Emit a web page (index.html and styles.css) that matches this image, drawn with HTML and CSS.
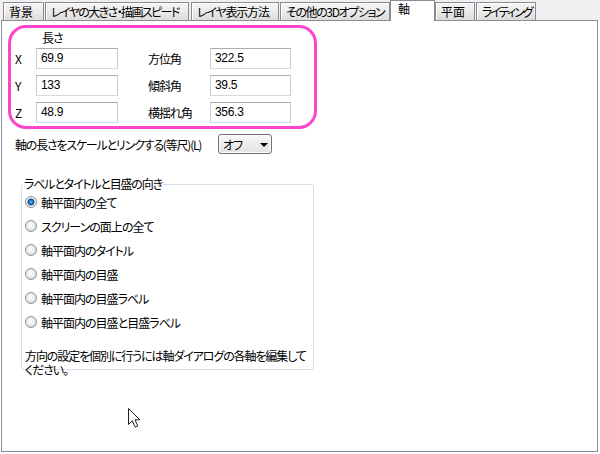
FILE: index.html
```html
<!DOCTYPE html>
<html lang="ja">
<head>
<meta charset="utf-8">
<title>軸</title>
<link rel="stylesheet" href="styles.css">
</head>
<body>
<div class="tabs">
  <div class="tab t1">背景</div>
  <div class="tab t2">レイヤの大きさ・描画スピード</div>
  <div class="tab t3">レイヤ表示方法</div>
  <div class="tab t4">その他の3Dオプション</div>
  <div class="tab sel t5">軸</div>
  <div class="tab t6">平面</div>
  <div class="tab t7">ライティング</div>
</div>
<div class="panel">
  <div class="hl">
    <div class="len-title">長さ</div>
    <div class="grid">
      <span class="lbl">X</span><div class="inp">69.9</div><span></span><span class="lbl">方位角</span><div class="inp">322.5</div>
      <span class="lbl">Y</span><div class="inp">133</div><span></span><span class="lbl">傾斜角</span><div class="inp">39.5</div>
      <span class="lbl">Z</span><div class="inp">48.9</div><span></span><span class="lbl">横揺れ角</span><div class="inp">356.3</div>
    </div>
  </div>
  <div class="link-row">
    <span class="link-lbl">軸の長さをスケールとリンクする(等尺)(L)</span>
    <div class="combo"><span>オフ</span><span class="arrow"></span></div>
  </div>
  <fieldset class="grp">
    <legend>ラベルとタイトルと目盛の向き</legend>
    <div class="opts">
      <div class="opt"><span class="radio on"></span>軸平面内の全て</div>
      <div class="opt"><span class="radio"></span>スクリーンの面上の全て</div>
      <div class="opt"><span class="radio"></span>軸平面内のタイトル</div>
      <div class="opt"><span class="radio"></span>軸平面内の目盛</div>
      <div class="opt"><span class="radio"></span>軸平面内の目盛ラベル</div>
      <div class="opt"><span class="radio"></span>軸平面内の目盛と目盛ラベル</div>
    </div>
    <p class="note">方向の設定を個別に行うには軸ダイアログの各軸を編集して<br>ください。</p>
  </fieldset>
  <svg class="cursor" width="13" height="20" viewBox="0 0 13 20">
    <path d="M0.5 0.5 L0.5 16.5 L4.3 12.8 L7.2 19.2 L9.8 18 L7 11.8 L11.8 11.8 Z" fill="#fff" stroke="#222" stroke-width="1" stroke-linejoin="miter"/>
  </svg>
</div>
</body>
</html>
```
FILE: styles.css
```css
body {
  margin: 0;
  width: 600px;
  height: 454px;
  overflow: hidden;
  background: #fff;
  color: #000;
  font-family: "Noto Sans CJK JP", "Noto Sans", sans-serif;
  font-size: 12px;
  font-feature-settings: "palt";
  letter-spacing: -1px;
}

.tabs {
  display: flex;
  align-items: flex-end;
  height: 20px;
  padding-left: 3px;
  background: #f0f0f0;
}

.tab {
  box-sizing: border-box;
  height: 18px;
  border: 1px solid #898c95;
  border-bottom: none;
  background: linear-gradient(#f5f5f5, #ebebeb 50%, #dcdcdc);
  box-shadow: inset 1px 1px 0 #fff;
  padding: 1px 0 0 5px;
  line-height: 16px;
  white-space: nowrap;
  overflow: hidden;
}

.t1 { width: 41px; letter-spacing: 0; }
.t2 { width: 144px; margin-left: 1px; letter-spacing: -1.6px; }
.t3 { width: 88px; margin-left: 2px; letter-spacing: -1.2px; }
.t4 { width: 110px; margin-left: 1px; letter-spacing: -1.4px; }
.t5 { width: 45px; }
.t6 { width: 40px; letter-spacing: 0; }
.t7 { width: 60px; margin-left: 1px; letter-spacing: -2px; }

.sel {
  height: 21px;
  margin-bottom: -1px;
  position: relative;
  z-index: 1;
  background: #fff;
  box-shadow: none;
  padding: 0 0 0 7px;
}

.panel {
  box-sizing: border-box;
  position: relative;
  width: 597px;
  height: 432px;
  margin-left: 1px;
  border: 1px solid #898c95;
  background: #fff;
}

.hl {
  box-sizing: border-box;
  width: 309px;
  height: 104px;
  margin: 4px 0 0 6px;
  padding: 3px 0 0 4px;
  border: 3px solid #ff44cc;
  border-radius: 18px;
}

.len-title {
  margin-left: 27px;
  line-height: 14px;
}

.grid {
  display: grid;
  grid-template-columns: 21px 82px 30px 62px 81px;
  grid-auto-rows: 21px;
  row-gap: 6px;
  align-items: center;
  margin-top: 3px;
}

.lbl {
  line-height: 14px;
}

.inp {
  box-sizing: border-box;
  height: 21px;
  border: 1px solid;
  border-color: #abadb3 #c9ccd2 #d6d9de #c9ccd2;
  padding-left: 4px;
  line-height: 19px;
  font-family: "Liberation Sans", sans-serif;
  font-size: 12px;
  letter-spacing: -0.3px;
}

.link-row {
  display: flex;
  align-items: center;
  height: 20px;
  margin-top: 5px;
  padding-left: 13px;
}

.link-lbl {
  width: 203px;
  white-space: nowrap;
  letter-spacing: -1.2px;
}

.combo {
  box-sizing: border-box;
  display: flex;
  align-items: center;
  justify-content: space-between;
  width: 54px;
  height: 20px;
  padding: 0 3px 0 4px;
  border: 1px solid #707070;
  border-radius: 3px;
  background: linear-gradient(#f8f8f8, #ececec 50%, #e2e2e2);
  box-shadow: inset 0 0 0 1px #fcfcfc;
}

.arrow {
  width: 0;
  height: 0;
  border-left: 4px solid transparent;
  border-right: 4px solid transparent;
  border-top: 4px solid #000;
  margin-top: 1px;
}

.grp {
  box-sizing: border-box;
  width: 293px;
  height: 193px;
  margin: 23px 0 0 19px;
  padding: 0;
  border: 1px solid #d5dfe5;
  border-radius: 3px;
  min-inline-size: auto;
}

.grp legend {
  margin-left: 1px;
  padding: 0 1px;
  line-height: 14px;
  letter-spacing: -1.2px;
}

.opts {
  display: flex;
  flex-direction: column;
  gap: 4px;
  padding: 1px 0 0 3px;
}

.opt {
  display: flex;
  align-items: center;
  gap: 4px;
  height: 20px;
  white-space: nowrap;
}

.radio {
  box-sizing: border-box;
  width: 12px;
  height: 12px;
  border-radius: 50%;
  border: 1px solid #8f9092;
  background: radial-gradient(circle at 45% 40%, #ffffff 0, #ececec 45%, #c9c9c9 100%);
}

.radio.on {
  background: radial-gradient(circle, #8fd0ff 0, #2a7fc8 1.5px, #0f4f92 3.2px, #e2e2e2 3.8px, #f4f4f4 4.5px, #cfcfcf 100%);
}

.note {
  margin: 17px 0 0;
  padding-left: 3px;
  line-height: 14px;
  white-space: nowrap;
  letter-spacing: -1.1px;
}

.cursor {
  position: absolute;
  left: 126px;
  top: 387px;
}
```
